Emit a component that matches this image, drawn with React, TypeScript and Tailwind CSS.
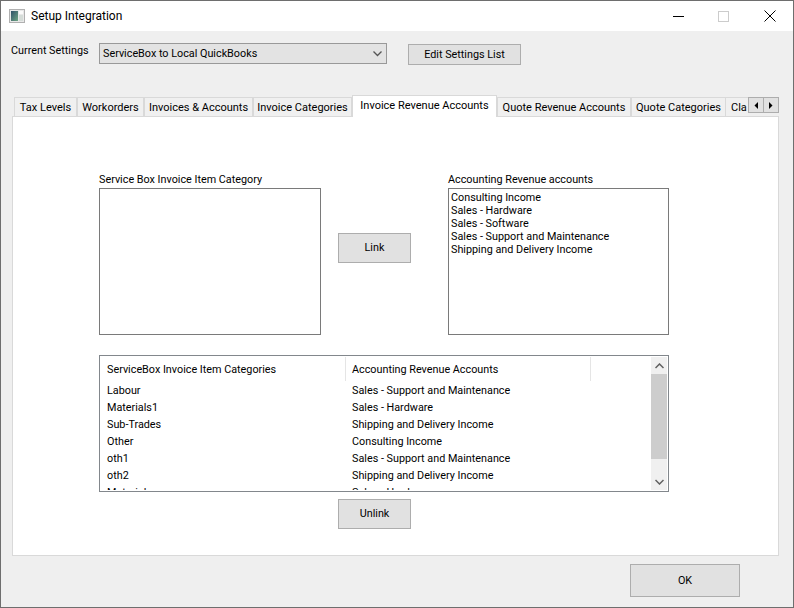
const tabs = [
  { label: 'Tax Levels', w: 'w-[63px]' },
  { label: 'Workorders', w: 'w-[67px]' },
  { label: 'Invoices & Accounts', w: 'w-[109px]' },
  { label: 'Invoice Categories', w: 'w-[99px]' },
  { label: 'Invoice Revenue Accounts', w: 'w-[145px]', active: true },
  { label: 'Quote Revenue Accounts', w: 'w-[134px]' },
  { label: 'Quote Categories', w: 'w-[95px]' },
];

const accounts = [
  'Consulting Income',
  'Sales - Hardware',
  'Sales - Software',
  'Sales - Support and Maintenance',
  'Shipping and Delivery Income',
];

const links = [
  ['Labour', 'Sales - Support and Maintenance'],
  ['Materials1', 'Sales - Hardware'],
  ['Sub-Trades', 'Shipping and Delivery Income'],
  ['Other', 'Consulting Income'],
  ['oth1', 'Sales - Support and Maintenance'],
  ['oth2', 'Shipping and Delivery Income'],
  ['Materials', 'Sales - Hardware'],
];

function WinButton({ label, className }: { label: string; className: string }) {
  return (
    <button className={`flex items-center justify-center border border-[#adadad] bg-[#e1e1e1] pt-[1px] text-black ${className}`}>
      {label}
    </button>
  );
}

function AppIcon() {
  return (
    <svg width="16" height="14" viewBox="0 0 16 14" className="ml-[8px]">
      <defs>
        <linearGradient id="appFill" x1="0" y1="0" x2="1" y2="1">
          <stop offset="0" stopColor="#2f4f68" />
          <stop offset="1" stopColor="#6fa583" />
        </linearGradient>
      </defs>
      <rect x="0.5" y="0.5" width="15" height="13" fill="#e8e8e8" stroke="#b0b0b0" />
      <rect x="2" y="2" width="7" height="10" fill="url(#appFill)" />
      <rect x="10" y="2" width="4" height="3" fill="#fafafa" />
      <rect x="10" y="6" width="4" height="6" fill="#d5dcd8" />
    </svg>
  );
}

function TitleBar() {
  return (
    <div className="flex h-[30px] items-center bg-white">
      <AppIcon />
      <span className="ml-[6px] text-[12px]">Setup Integration</span>
      <div className="ml-auto flex items-center">
        <svg width="11" height="11" viewBox="0 0 11 11" className="mr-[34px]">
          <path d="M0 5.5H11" stroke="#000" strokeWidth="1" />
        </svg>
        <svg width="11" height="11" viewBox="0 0 11 11" className="mr-[35px]">
          <rect x="0.5" y="0.5" width="10" height="10" fill="none" stroke="#cccccc" />
        </svg>
        <svg width="12" height="12" viewBox="0 0 12 12" className="mr-[17px]">
          <path d="M0.5 0.5L11.5 11.5M11.5 0.5L0.5 11.5" stroke="#000" strokeWidth="1" />
        </svg>
      </div>
    </div>
  );
}

function SettingsRow() {
  return (
    <div className="flex h-[64px] items-start pl-[10px] pt-[12px]">
      <span className="mt-[1px] w-[88px] text-[10.8px] leading-[14px]">Current Settings</span>
      <div className="flex h-[21px] w-[288px] items-center justify-between border border-[#999999] bg-[#e3e3e3] pl-[3px] pr-[4px] pt-[2px] text-[10.8px]">
        <span>ServiceBox to Local QuickBooks</span>
        <svg width="9" height="6" viewBox="0 0 9 6" className="-mt-[2px]">
          <path d="M0.5 0.5L4.5 4.5L8.5 0.5" fill="none" stroke="#555" strokeWidth="1.3" />
        </svg>
      </div>
      <WinButton label="Edit Settings List" className="ml-[21px] mt-[1px] h-[21px] w-[113px] text-[10.8px]" />
    </div>
  );
}

function TabStrip() {
  return (
    <div className="relative z-10 ml-[13px] flex h-[21px] items-end whitespace-nowrap text-[11px]">
      {tabs.map((t) =>
        t.active ? (
          <div
            key={t.label}
            className={`${t.w} -mb-[1px] flex h-[22px] items-start justify-center border border-b-0 border-[#d9d9d9] bg-white pt-[3px] leading-[14px]`}
          >
            {t.label}
          </div>
        ) : (
          <div
            key={t.label}
            className={`${t.w} flex h-[19px] items-center justify-center border-t border-r border-l border-[#d9d9d9] bg-[#f0f0f0] pt-[2px]`}
          >
            {t.label}
          </div>
        )
      )}
      <div className="h-[19px] w-[22px] overflow-hidden border-t border-[#d9d9d9] bg-[#f0f0f0] pl-[5px] pt-[3px] leading-[14px]">
        Cla
      </div>
      <div className="mb-[3px] flex h-[16px]">
        <div className="flex w-[16px] items-center justify-center border border-[#adadad] bg-[#e1e1e1]">
          <svg width="4" height="7" viewBox="0 0 4 7">
            <path d="M4 0V7L0.5 3.5Z" fill="#000" />
          </svg>
        </div>
        <div className="-ml-[1px] flex w-[16px] items-center justify-center border border-[#adadad] bg-[#e1e1e1]">
          <svg width="4" height="7" viewBox="0 0 4 7">
            <path d="M0 0V7L3.5 3.5Z" fill="#000" />
          </svg>
        </div>
      </div>
    </div>
  );
}

function ListBox({ title, items, className }: { title: string; items: string[]; className: string }) {
  return (
    <div className={`flex flex-col ${className}`}>
      <div className="h-[16px] pt-[1px] text-[10.8px] leading-[14px]">{title}</div>
      <div className="h-[147px] border border-[#7a7a7a] bg-white px-[2px] pt-[2px] text-[10.8px] leading-[13px]">
        {items.map((item) => (
          <div key={item}>{item}</div>
        ))}
      </div>
    </div>
  );
}

function ScrollBar() {
  return (
    <div className="flex w-[16px] flex-col bg-[#f0f0f0]">
      <div className="flex h-[17px] items-center justify-center">
        <svg width="9" height="6" viewBox="0 0 9 6">
          <path d="M0.5 5L4.5 1L8.5 5" fill="none" stroke="#606060" strokeWidth="1.5" />
        </svg>
      </div>
      <div className="h-[85px] bg-[#cdcdcd]" />
      <div className="flex-1" />
      <div className="flex h-[17px] items-center justify-center">
        <svg width="9" height="6" viewBox="0 0 9 6">
          <path d="M0.5 1L4.5 5L8.5 1" fill="none" stroke="#606060" strokeWidth="1.5" />
        </svg>
      </div>
    </div>
  );
}

function LinkTable() {
  return (
    <div className="mt-[20px] flex h-[137px] w-[570px] border border-[#82878c] bg-white p-[1px] text-[10.8px]">
      <div className="min-w-0 flex-1 overflow-hidden">
        <div className="flex h-[26px] items-start">
          <div className="flex h-[24px] w-[245px] items-center border-r border-[#e5e5e5] pl-[6px] pt-[2px]">
            ServiceBox Invoice Item Categories
          </div>
          <div className="flex h-[24px] w-[245px] items-center border-r border-[#e5e5e5] pl-[6px] pt-[2px]">
            Accounting Revenue Accounts
          </div>
        </div>
        {links.map(([category, account]) => (
          <div key={category + account} className="flex h-[17px] items-center">
            <div className="w-[245px] pl-[6px]">{category}</div>
            <div className="pl-[6px]">{account}</div>
          </div>
        ))}
      </div>
      <ScrollBar />
    </div>
  );
}

function TabPanel() {
  return (
    <div className="ml-[11px] h-[440px] w-[767px] border border-[#d9d9d9] bg-white pl-[86px] pt-[55px]">
      <div className="flex">
        <ListBox title="Service Box Invoice Item Category" items={[]} className="w-[222px]" />
        <div className="ml-[17px] mr-[37px] pt-[61px]">
          <WinButton label="Link" className="h-[30px] w-[73px] text-[10.8px]" />
        </div>
        <ListBox title="Accounting Revenue accounts" items={accounts} className="w-[221px]" />
      </div>
      <LinkTable />
      <div className="ml-[239px] mt-[7px]">
        <WinButton label="Unlink" className="h-[30px] w-[73px] text-[10.8px]" />
      </div>
    </div>
  );
}

export default function App() {
  return (
    <div className="h-[608px] w-[794px] overflow-hidden border border-[#6e6e6e] bg-[#efefef] font-['Roboto',Arial,sans-serif] text-black">
      <TitleBar />
      <SettingsRow />
      <TabStrip />
      <TabPanel />
      <div className="flex justify-end pr-[53px] pt-[8px]">
        <WinButton label="OK" className="h-[33px] w-[110px] text-[10.8px]" />
      </div>
    </div>
  );
}
